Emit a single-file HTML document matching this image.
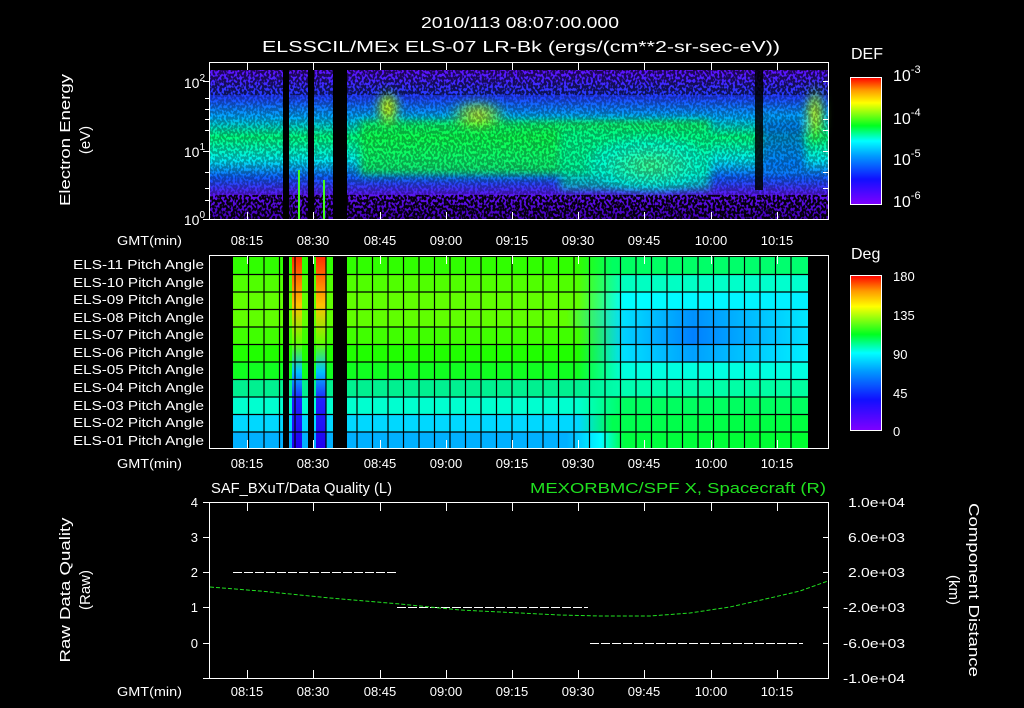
<!DOCTYPE html>
<html><head><meta charset="utf-8"><style>
html,body{margin:0;padding:0;background:#000;width:1024px;height:708px;overflow:hidden}
svg{display:block}
text{font-family:"Liberation Sans",sans-serif;fill:#fff;font-size:13px}
</style></head><body>
<svg width="1024" height="708" viewBox="0 0 1024 708" xmlns="http://www.w3.org/2000/svg">
<defs>
<linearGradient id="cb" x1="0" y1="1" x2="0" y2="0">
<stop offset="0" stop-color="#8000ff"/><stop offset="0.2" stop-color="#1010ff"/><stop offset="0.38" stop-color="#0099ff"/><stop offset="0.5" stop-color="#00ffff"/><stop offset="0.62" stop-color="#00ff20"/><stop offset="0.8" stop-color="#ffff00"/><stop offset="0.9" stop-color="#ff9900"/><stop offset="1" stop-color="#ff0000"/>
</linearGradient>
<linearGradient id="specV" x1="0" y1="0" x2="0" y2="1">
<stop offset="0" stop-color="#6010ff"/><stop offset="0.18" stop-color="#2040ff"/><stop offset="0.32" stop-color="#00b0ff"/><stop offset="0.45" stop-color="#00ff80"/><stop offset="0.6" stop-color="#00f0f0"/><stop offset="0.72" stop-color="#1060ff"/><stop offset="0.85" stop-color="#6010f0"/><stop offset="1" stop-color="#4000b0"/>
</linearGradient>
<radialGradient id="yel" cx="0.5" cy="0.5" r="0.5"><stop offset="0" stop-color="#ffff00"/><stop offset="0.5" stop-color="#a0ff00" stop-opacity="0.7"/><stop offset="1" stop-color="#00ff40" stop-opacity="0"/></radialGradient>
<radialGradient id="cyb" cx="0.5" cy="0.5" r="0.5"><stop offset="0" stop-color="#40ff90"/><stop offset="0.7" stop-color="#00ffe0" stop-opacity="0.8"/><stop offset="1" stop-color="#00ffff" stop-opacity="0"/></radialGradient>
<filter id="speck" x="0" y="0" width="1" height="1">
<feTurbulence type="fractalNoise" baseFrequency="0.45 0.35" numOctaves="1" seed="3"/>
<feColorMatrix type="matrix" values="0 0 0 0 0  0 0 0 0 0  0 0 0 0 0  0 0 0 -9 5.2"/>
</filter>
<filter id="blur4"><feGaussianBlur stdDeviation="4"/></filter>
</defs>

<!-- titles -->
<text x="520" y="28" text-anchor="middle" style="font-size:16px" textLength="198" lengthAdjust="spacingAndGlyphs">2010/113 08:07:00.000</text>
<text x="521" y="52" text-anchor="middle" style="font-size:16px" textLength="518" lengthAdjust="spacingAndGlyphs">ELSSCIL/MEx ELS-07 LR-Bk  (ergs/(cm**2-sr-sec-eV))</text>

<!-- PANEL 1 spectrogram -->
<rect x="210" y="70" width="618" height="149" fill="url(#specV)"/>
<g filter="url(#blur4)">
<rect x="360" y="120" width="350" height="55" fill="#10ff40" opacity="0.75"/>
<rect x="560" y="130" width="150" height="60" fill="#00ffb0" opacity="0.6"/>
<ellipse cx="650" cy="165" rx="70" ry="30" fill="url(#cyb)"/>
<ellipse cx="388" cy="108" rx="14" ry="22" fill="url(#yel)"/>
<ellipse cx="478" cy="115" rx="32" ry="18" fill="url(#yel)" opacity="0.8"/>
<ellipse cx="815" cy="115" rx="12" ry="35" fill="url(#yel)" opacity="0.9"/>
<rect x="760" y="120" width="45" height="50" fill="#0040ff" opacity="0.6"/>
</g>
<rect x="210" y="70" width="618" height="149" filter="url(#speck)" opacity="0.3"/>
<rect x="210" y="195" width="618" height="24" filter="url(#speck)" opacity="0.9"/>
<rect x="210" y="70" width="618" height="25" filter="url(#speck)" opacity="0.5"/>
<rect x="283" y="70" width="6" height="149" fill="#000"/>
<rect x="308" y="70" width="6" height="149" fill="#000"/>
<rect x="333" y="70" width="14" height="149" fill="#000"/>
<rect x="755" y="70" width="8" height="120" fill="#000" opacity="0.85"/>
<rect x="298" y="170" width="2" height="49" fill="#40ff20"/>
<rect x="323" y="180" width="2" height="39" fill="#40ff20"/>
<rect x="209.5" y="62.5" width="619" height="157" fill="none" stroke="#fff"/>
<g stroke="#fff" stroke-width="1">
<path d="M203 81.5h7M203 151.5h7M203 219.5h7M205 98.5h5M205 109.5h5M205 119.5h5M205 130.5h5M205 172.5h5M205 188.5h5M205 200.5h5M823 81.5h5M823 151.5h5M823 119.5h5M823 130.5h5M823 172.5h5M823 188.5h5"/>
</g>
<text x="205" y="88" text-anchor="end" style="font-size:14px">10<tspan dy="-7" style="font-size:10px">2</tspan></text>
<text x="205" y="157" text-anchor="end" style="font-size:14px">10<tspan dy="-7" style="font-size:10px">1</tspan></text>
<text x="205" y="225" text-anchor="end" style="font-size:14px">10<tspan dy="-7" style="font-size:10px">0</tspan></text>
<text transform="translate(70,140) rotate(-90)" text-anchor="middle" style="font-size:15px" textLength="132" lengthAdjust="spacingAndGlyphs">Electron Energy</text>
<text transform="translate(90,140) rotate(-90)" text-anchor="middle" style="font-size:15px">(eV)</text>

<!-- colorbar 1 -->
<text x="851" y="59" style="font-size:16px">DEF</text>
<rect x="850.5" y="77.5" width="31" height="127" fill="url(#cb)" stroke="#fff"/>
<text x="893" y="81" style="font-size:16px">10<tspan dy="-8" style="font-size:11px">-3</tspan></text>
<text x="893" y="124" style="font-size:16px">10<tspan dy="-8" style="font-size:11px">-4</tspan></text>
<text x="893" y="165" style="font-size:16px">10<tspan dy="-8" style="font-size:11px">-5</tspan></text>
<text x="893" y="207" style="font-size:16px">10<tspan dy="-8" style="font-size:11px">-6</tspan></text>

<!-- time labels -->
<g style="font-size:14px">
<text x="117" y="245" textLength="65" lengthAdjust="spacingAndGlyphs">GMT(min)</text>
<text x="117" y="468" textLength="65" lengthAdjust="spacingAndGlyphs">GMT(min)</text>
<text x="117" y="696" textLength="65" lengthAdjust="spacingAndGlyphs">GMT(min)</text>
</g>
<g text-anchor="middle" style="font-size:14px">
<text x="247" y="245">08:15</text><text x="313" y="245">08:30</text><text x="380" y="245">08:45</text><text x="446" y="245">09:00</text><text x="512" y="245">09:15</text><text x="578" y="245">09:30</text><text x="644" y="245">09:45</text><text x="711" y="245">10:00</text><text x="777" y="245">10:15</text>
<text x="247" y="468">08:15</text><text x="313" y="468">08:30</text><text x="380" y="468">08:45</text><text x="446" y="468">09:00</text><text x="512" y="468">09:15</text><text x="578" y="468">09:30</text><text x="644" y="468">09:45</text><text x="711" y="468">10:00</text><text x="777" y="468">10:15</text>
<text x="247" y="696">08:15</text><text x="313" y="696">08:30</text><text x="380" y="696">08:45</text><text x="446" y="696">09:00</text><text x="512" y="696">09:15</text><text x="578" y="696">09:30</text><text x="644" y="696">09:45</text><text x="711" y="696">10:00</text><text x="777" y="696">10:15</text>
</g>

<!-- PANEL 2 pitch angle -->
<defs>
<linearGradient id="r1"><stop offset="0" stop-color="#30ff00"/><stop offset="0.6" stop-color="#30ff00"/><stop offset="0.66" stop-color="#00ff60"/><stop offset="1" stop-color="#00ff70"/></linearGradient>
<linearGradient id="r2"><stop offset="0" stop-color="#50ff00"/><stop offset="0.6" stop-color="#50ff00"/><stop offset="0.68" stop-color="#00ffc0"/><stop offset="1" stop-color="#00ffd0"/></linearGradient>
<linearGradient id="r3"><stop offset="0" stop-color="#60ff00"/><stop offset="0.6" stop-color="#60ff00"/><stop offset="0.68" stop-color="#00ffff"/><stop offset="1" stop-color="#00f0ff"/></linearGradient>
<linearGradient id="r4"><stop offset="0" stop-color="#60ff00"/><stop offset="0.58" stop-color="#60ff00"/><stop offset="0.68" stop-color="#00e0ff"/><stop offset="0.8" stop-color="#0090ff"/><stop offset="1" stop-color="#00e8ff"/></linearGradient>
<linearGradient id="r5"><stop offset="0" stop-color="#40ff00"/><stop offset="0.6" stop-color="#40ff00"/><stop offset="0.68" stop-color="#00d0ff"/><stop offset="0.8" stop-color="#0080ff"/><stop offset="1" stop-color="#00e0ff"/></linearGradient>
<linearGradient id="r6"><stop offset="0" stop-color="#20ff00"/><stop offset="0.6" stop-color="#20ff00"/><stop offset="0.68" stop-color="#00e0ff"/><stop offset="0.8" stop-color="#00a0ff"/><stop offset="1" stop-color="#00f0ff"/></linearGradient>
<linearGradient id="r7"><stop offset="0" stop-color="#10ff20"/><stop offset="0.6" stop-color="#10ff20"/><stop offset="0.68" stop-color="#00ffe0"/><stop offset="1" stop-color="#00ffe0"/></linearGradient>
<linearGradient id="r8"><stop offset="0" stop-color="#00f090"/><stop offset="0.6" stop-color="#00f090"/><stop offset="0.68" stop-color="#00ffb0"/><stop offset="1" stop-color="#00ffa0"/></linearGradient>
<linearGradient id="r9"><stop offset="0" stop-color="#00ffd0"/><stop offset="0.6" stop-color="#00ffd0"/><stop offset="0.68" stop-color="#00ff60"/><stop offset="1" stop-color="#00ff60"/></linearGradient>
<linearGradient id="r10"><stop offset="0" stop-color="#00d8ff"/><stop offset="0.6" stop-color="#00d8ff"/><stop offset="0.66" stop-color="#00ff50"/><stop offset="1" stop-color="#00ff40"/></linearGradient>
<linearGradient id="r11"><stop offset="0" stop-color="#00b0ff"/><stop offset="0.58" stop-color="#00b0ff"/><stop offset="0.64" stop-color="#00ffff"/><stop offset="0.68" stop-color="#00ff40"/><stop offset="1" stop-color="#00ff30"/></linearGradient>
<linearGradient id="hot" x1="0" y1="0" x2="0" y2="1"><stop offset="0" stop-color="#ff3000"/><stop offset="0.25" stop-color="#ffc000"/><stop offset="0.45" stop-color="#60ff00"/><stop offset="0.6" stop-color="#00c0ff"/><stop offset="0.75" stop-color="#2020ff"/><stop offset="1" stop-color="#2000f0"/></linearGradient>
</defs>
<g>
<rect x="233" y="257" width="575" height="17.5" fill="url(#r1)"/>
<rect x="233" y="274.5" width="575" height="17.5" fill="url(#r2)"/>
<rect x="233" y="292" width="575" height="17.5" fill="url(#r3)"/>
<rect x="233" y="309.5" width="575" height="17.5" fill="url(#r4)"/>
<rect x="233" y="327" width="575" height="17.5" fill="url(#r5)"/>
<rect x="233" y="344.5" width="575" height="17.5" fill="url(#r6)"/>
<rect x="233" y="362" width="575" height="17.5" fill="url(#r7)"/>
<rect x="233" y="379.5" width="575" height="17.5" fill="url(#r8)"/>
<rect x="233" y="397" width="575" height="17.5" fill="url(#r9)"/>
<rect x="233" y="414.5" width="575" height="17.5" fill="url(#r10)"/>
<rect x="233" y="432" width="575" height="16" fill="url(#r11)"/>
<rect x="292" y="257" width="10" height="191" fill="url(#hot)"/>
<rect x="316" y="257" width="10" height="191" fill="url(#hot)"/>
<rect x="283" y="257" width="6" height="191" fill="#000"/>
<rect x="308" y="257" width="6" height="191" fill="#000"/>
<rect x="333" y="257" width="14" height="191" fill="#000"/>
</g>
<g stroke="#000" stroke-width="1.2">
<path d="M233 274.5h575M233 292h575M233 309.5h575M233 327h575M233 344.5h575M233 362h575M233 379.5h575M233 397h575M233 414.5h575M233 432h575"/>
<path d="M248.5 257v191M264 257v191M279.5 257v191M295 257v191M310.5 257v191M326 257v191M341.5 257v191M357 257v191M372.5 257v191M388 257v191M403.5 257v191M419 257v191M434.5 257v191M450 257v191M465.5 257v191M481 257v191M496.5 257v191M512 257v191M527.5 257v191M543 257v191M558.5 257v191M574 257v191M589.5 257v191M605 257v191M620.5 257v191M636 257v191M651.5 257v191M667 257v191M682.5 257v191M698 257v191M713.5 257v191M729 257v191M744.5 257v191M760 257v191M775.5 257v191M791 257v191"/>
</g>
<rect x="209.5" y="255.5" width="619" height="193" fill="none" stroke="#fff"/>
<g text-anchor="end" style="font-size:13px">
<text x="204" y="269" textLength="131" lengthAdjust="spacingAndGlyphs">ELS-11 Pitch Angle</text>
<text x="204" y="287" textLength="131" lengthAdjust="spacingAndGlyphs">ELS-10 Pitch Angle</text>
<text x="204" y="304" textLength="131" lengthAdjust="spacingAndGlyphs">ELS-09 Pitch Angle</text>
<text x="204" y="322" textLength="131" lengthAdjust="spacingAndGlyphs">ELS-08 Pitch Angle</text>
<text x="204" y="339" textLength="131" lengthAdjust="spacingAndGlyphs">ELS-07 Pitch Angle</text>
<text x="204" y="357" textLength="131" lengthAdjust="spacingAndGlyphs">ELS-06 Pitch Angle</text>
<text x="204" y="374" textLength="131" lengthAdjust="spacingAndGlyphs">ELS-05 Pitch Angle</text>
<text x="204" y="392" textLength="131" lengthAdjust="spacingAndGlyphs">ELS-04 Pitch Angle</text>
<text x="204" y="410" textLength="131" lengthAdjust="spacingAndGlyphs">ELS-03 Pitch Angle</text>
<text x="204" y="427" textLength="131" lengthAdjust="spacingAndGlyphs">ELS-02 Pitch Angle</text>
<text x="204" y="445" textLength="131" lengthAdjust="spacingAndGlyphs">ELS-01 Pitch Angle</text>
</g>

<!-- colorbar 2 -->
<text x="851" y="259" style="font-size:16px">Deg</text>
<rect x="850.5" y="275.5" width="31" height="155" fill="url(#cb)" stroke="#fff"/>
<g style="font-size:16px">
<text x="893" y="281">180</text><text x="893" y="320">135</text><text x="893" y="359">90</text><text x="893" y="398">45</text><text x="893" y="436">0</text>
</g>

<!-- PANEL 3 -->
<text x="211" y="493" style="font-size:15px" textLength="181" lengthAdjust="spacingAndGlyphs">SAF_BXuT/Data Quality (L)</text>
<text x="826" y="493" text-anchor="end" style="font-size:15px;fill:#20e020" textLength="296" lengthAdjust="spacingAndGlyphs">MEXORBMC/SPF X, Spacecraft (R)</text>
<rect x="209.5" y="502.5" width="619" height="176" fill="none" stroke="#fff"/>
<g stroke="#fff" stroke-dasharray="9 2" stroke-width="1">
<path d="M233 572.5h164M397 607.5h191M590 643.5h213"/>
</g>
<path d="M210 587 L260 591 L330 598 L400 604 L460 610 L520 613 L560 615 L600 616 L650 616 L690 613 L730 607 L770 598 L800 591 L828 581" fill="none" stroke="#20e020" stroke-width="1" stroke-dasharray="4 2"/>
<g stroke="#fff">
<path d="M203 502.5h7M203 537.5h7M203 572.5h7M203 607.5h7M203 643.5h7M203 678.5h7M823 502.5h5M823 537.5h5M823 572.5h5M823 607.5h5M823 643.5h5M823 678.5h5"/>
</g>
<g text-anchor="end" style="font-size:14px">
<text x="198" y="507">4</text><text x="198" y="542">3</text><text x="198" y="577">2</text><text x="198" y="612">1</text><text x="198" y="648">0</text>
</g>
<g style="font-size:13px">
<text x="848" y="507" textLength="57" lengthAdjust="spacingAndGlyphs">1.0e+04</text><text x="848" y="542" textLength="57" lengthAdjust="spacingAndGlyphs">6.0e+03</text><text x="848" y="577" textLength="57" lengthAdjust="spacingAndGlyphs">2.0e+03</text><text x="843" y="612" textLength="62" lengthAdjust="spacingAndGlyphs">-2.0e+03</text><text x="843" y="648" textLength="62" lengthAdjust="spacingAndGlyphs">-6.0e+03</text><text x="843" y="683" textLength="62" lengthAdjust="spacingAndGlyphs">-1.0e+04</text>
</g>
<text transform="translate(70,590) rotate(-90)" text-anchor="middle" style="font-size:15px" textLength="145" lengthAdjust="spacingAndGlyphs">Raw Data Quality</text>
<text transform="translate(90,590) rotate(-90)" text-anchor="middle" style="font-size:15px">(Raw)</text>
<text transform="translate(969,590) rotate(90)" text-anchor="middle" style="font-size:15px" textLength="174" lengthAdjust="spacingAndGlyphs">Component Distance</text>
<text transform="translate(949,590) rotate(90)" text-anchor="middle" style="font-size:15px">(km)</text>

<!-- x ticks -->
<g stroke="#fff">
<path d="M247.5 62v8M313.5 62v8M380.5 62v8M446.5 62v8M512.5 62v8M578.5 62v8M644.5 62v8M711.5 62v8M777.5 62v8M247.5 212v8M313.5 212v8M380.5 212v8M446.5 212v8M512.5 212v8M578.5 212v8M644.5 212v8M711.5 212v8M777.5 212v8"/>
<path d="M247.5 256v8M313.5 256v8M380.5 256v8M446.5 256v8M512.5 256v8M578.5 256v8M644.5 256v8M711.5 256v8M777.5 256v8M247.5 440v8M313.5 440v8M380.5 440v8M446.5 440v8M512.5 440v8M578.5 440v8M644.5 440v8M711.5 440v8M777.5 440v8"/>
<path d="M247.5 503v8M313.5 503v8M380.5 503v8M446.5 503v8M512.5 503v8M578.5 503v8M644.5 503v8M711.5 503v8M777.5 503v8M247.5 670v8M313.5 670v8M380.5 670v8M446.5 670v8M512.5 670v8M578.5 670v8M644.5 670v8M711.5 670v8M777.5 670v8"/>
</g>
</svg>
</body></html>
